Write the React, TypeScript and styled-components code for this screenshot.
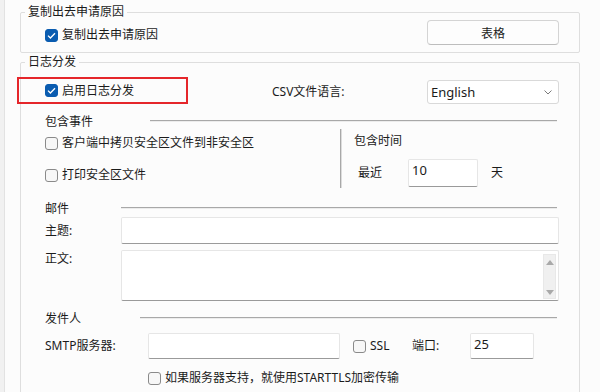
import styled, { createGlobalStyle } from "styled-components";

const GlobalStyle = createGlobalStyle`
    html, body {
        margin: 0;
        padding: 0;
        background: #fcfcfc;
    }
    * {
        box-sizing: border-box;
    }
`

const Page = styled.div`
    display: flex;
    width: 600px;
    height: 392px;
    overflow: hidden;
    background: #fcfcfc;
    font-family: "Noto Sans", "Noto Sans CJK SC", sans-serif;
    font-size: 12px;
    color: #1b1b1b;
`

const Rail = styled.div`
    width: 5px;
    flex-shrink: 0;
    background: #f1f1f1;
    border-right: 1px solid #e2e2e2;
`

const Content = styled.div`
    padding: 3px 0 0 15px;
    display: flex;
    flex-direction: column;
`

const Group = styled.fieldset`
    width: 560px;
    margin: 0;
    padding: 0;
    border: 1px solid #dedede;
    border-radius: 2px;
    min-width: 0;
`

const Legend = styled.legend`
    margin-left: 4px;
    padding: 0 3px;
    line-height: 18px;
    font-size: 12px;
`

const CopyBody = styled.div`
    display: flex;
    align-items: flex-start;
    height: 31px;
    padding: 0 20px 0 24px;
`

const CheckLabel = styled.label<{ $top?: number }>`
    display: flex;
    align-items: center;
    gap: 4px;
    height: 18px;
    line-height: 18px;
    margin-top: ${(p) => p.$top ?? 0}px;
    white-space: nowrap;
`

const Box = styled.span<{ $checked?: boolean }>`
    display: inline-flex;
    align-items: center;
    justify-content: center;
    width: 13px;
    height: 13px;
    border-radius: 3px;
    flex-shrink: 0;
    background: ${(p) => (p.$checked ? "#0a5cb0" : "#f7f7f7")};
    border: 1px solid ${(p) => (p.$checked ? "#0a5cb0" : "#8a8a8a")};
`

const Button = styled.button`
    margin-left: auto;
    margin-top: -1px;
    width: 132px;
    height: 25px;
    background: #fdfdfd;
    border: 1px solid #d4d4d4;
    border-bottom-color: #bdbdbd;
    border-radius: 4px;
    font-family: inherit;
    font-size: 12px;
    color: #1b1b1b;
`

const LogBody = styled.div`
    display: flex;
    flex-direction: column;
    padding: 0 20px 40px 24px;
`

const TopRow = styled.div`
    display: flex;
    align-items: flex-end;
    height: 27px;
    margin-top: 6px;
    margin-left: -28px;
`

const Highlight = styled.div`
    display: flex;
    align-items: center;
    width: 171px;
    height: 27px;
    padding-left: 26px;
    border: 2px solid #e5262b;
`

const FieldText = styled.span<{ $width?: number; $indent?: number }>`
    display: inline-block;
    width: ${(p) => (p.$width ? `${p.$width}px` : "auto")};
    margin-left: ${(p) => p.$indent ?? 0}px;
    line-height: 24px;
    white-space: nowrap;
    flex-shrink: 0;
`

const Select = styled.div`
    display: flex;
    align-items: center;
    justify-content: space-between;
    margin-left: auto;
    width: 132px;
    height: 24px;
    padding: 0 6px 0 3px;
    background: #ffffff;
    border: 1px solid #d9d9d9;
    border-radius: 3px;
    font-size: 13px;
`

const SectionHeader = styled.div<{ $lineStart: number; $top: number }>`
    display: grid;
    grid-template-columns: ${(p) => p.$lineStart}px 1fr;
    align-items: center;
    height: 16px;
    line-height: 16px;
    margin-top: ${(p) => p.$top}px;
    padding-right: 2px;
`

const Rule = styled.div`
    height: 2px;
    border-top: 1px solid #a8a8a8;
    border-bottom: 1px solid #ececec;
    margin-top: -3px;
`

const Events = styled.div`
    display: grid;
    grid-template-columns: 295px 1fr;
    height: 58px;
`

const EventList = styled.div`
    display: flex;
    flex-direction: column;
    gap: 14px;
    padding-top: 4px;
`

const TimeBox = styled.div`
    margin-top: -1px;
    height: 59px;
    padding-left: 13px;
    border-left: 1px solid #a8a8a8;
    box-shadow: inset 1px 0 0 #dcdcdc;
    display: flex;
    flex-direction: column;
`

const TimeTitle = styled.div`
    line-height: 18px;
    padding-top: 3px;
`

const TimeRow = styled.div`
    display: flex;
    align-items: center;
    margin-top: 9px;
    padding-left: 4px;
`

const Input = styled.div<{ $width?: number; $height?: number }>`
    width: ${(p) => (p.$width ? `${p.$width}px` : "auto")};
    flex: ${(p) => (p.$width ? "none" : "1")};
    height: ${(p) => p.$height ?? 27}px;
    padding: 1px 0 0 3px;
    background: #ffffff;
    border: 1px solid #e6e6e6;
    border-bottom-color: #9a9a9a;
    border-radius: 2px;
    line-height: 18px;
    font-size: 13px;
`

const FormRow = styled.div<{ $top?: number; $align?: string }>`
    display: flex;
    align-items: ${(p) => p.$align ?? "center"};
    margin-top: ${(p) => p.$top ?? 0}px;
`

const RowLabel = styled.span<{ $width: number }>`
    width: ${(p) => p.$width}px;
    flex-shrink: 0;
    line-height: 18px;
`

const TextBox = styled.div`
    flex: 1;
    display: flex;
    justify-content: flex-end;
    height: 51px;
    padding: 3px 2px 1px 0;
    background: #ffffff;
    border: 1px solid #e6e6e6;
    border-bottom-color: #9a9a9a;
    border-radius: 2px;
`

const Scrollbar = styled.div`
    width: 13px;
    display: flex;
    flex-direction: column;
    justify-content: space-between;
    align-items: center;
    padding: 5px 0 3px;
    background: #f0f0f0;
    border: 1px solid #e8e8e8;
`

const SslWrap = styled.div`
    display: flex;
    align-items: center;
    width: 59px;
    margin-left: 13px;
`

const Check = ({ checked }: { checked?: boolean }) => (
    <Box $checked={checked}>
        {checked && (
            <svg width="9" height="7" viewBox="0 0 9 7">
                <path d="M1 3.6 L3.4 6 L8 1.2" fill="none" stroke="#fff" strokeWidth="1.3" />
            </svg>
        )}
    </Box>
)

const Arrow = ({ down }: { down?: boolean }) => (
    <svg width="8" height="5" viewBox="0 0 8 5">
        <path d={down ? "M0 0 H8 L4 5 Z" : "M0 5 H8 L4 0 Z"} fill="#a9a9a9" />
    </svg>
)

const App = () => {
    return (
        <>
            <GlobalStyle />
            <Page>
                <Rail />
                <Content>
                    <Group>
                        <Legend>复制出去申请原因</Legend>
                        <CopyBody>
                            <CheckLabel $top={5}>
                                <Check checked />
                                复制出去申请原因
                            </CheckLabel>
                            <Button type="button">表格</Button>
                        </CopyBody>
                    </Group>

                    <Group>
                        <Legend>日志分发</Legend>
                        <LogBody>
                            <TopRow>
                                <Highlight>
                                    <CheckLabel>
                                        <Check checked />
                                        启用日志分发
                                    </CheckLabel>
                                </Highlight>
                                <FieldText $indent={84}>CSV文件语言:</FieldText>
                                <Select>
                                    English
                                    <svg width="8" height="5" viewBox="0 0 8 5">
                                        <path d="M0.5 0.5 L4 4 L7.5 0.5" fill="none" stroke="#7a7a7a" strokeWidth="1" />
                                    </svg>
                                </Select>
                            </TopRow>

                            <SectionHeader $lineStart={105} $top={10}>
                                包含事件
                                <Rule />
                            </SectionHeader>
                            <Events>
                                <EventList>
                                    <CheckLabel>
                                        <Check />
                                        客户端中拷贝安全区文件到非安全区
                                    </CheckLabel>
                                    <CheckLabel>
                                        <Check />
                                        打印安全区文件
                                    </CheckLabel>
                                </EventList>
                                <TimeBox>
                                    <TimeTitle>包含时间</TimeTitle>
                                    <TimeRow>
                                        <RowLabel $width={50}>最近</RowLabel>
                                        <Input $width={70} $height={28}>10</Input>
                                        <FieldText $indent={13}>天</FieldText>
                                    </TimeRow>
                                </TimeBox>
                            </Events>

                            <SectionHeader $lineStart={76} $top={13}>
                                邮件
                                <Rule />
                            </SectionHeader>
                            <FormRow>
                                <RowLabel $width={76}>主题:</RowLabel>
                                <Input />
                            </FormRow>
                            <FormRow $top={6} $align="flex-start">
                                <RowLabel $width={76}>正文:</RowLabel>
                                <TextBox>
                                    <Scrollbar>
                                        <Arrow />
                                        <Arrow down />
                                    </Scrollbar>
                                </TextBox>
                            </FormRow>

                            <SectionHeader $lineStart={95} $top={10}>
                                发件人
                                <Rule />
                            </SectionHeader>
                            <FormRow $top={6}>
                                <RowLabel $width={103}>SMTP服务器:</RowLabel>
                                <Input $width={192} $height={26} />
                                <SslWrap>
                                    <CheckLabel>
                                        <Check />
                                        SSL
                                    </CheckLabel>
                                </SslWrap>
                                <RowLabel $width={58}>端口:</RowLabel>
                                <Input $width={64} $height={26}>25</Input>
                            </FormRow>
                            <FormRow $top={10}>
                                <RowLabel $width={103} />
                                <CheckLabel>
                                    <Check />
                                    如果服务器支持，就使用STARTTLS加密传输
                                </CheckLabel>
                            </FormRow>
                        </LogBody>
                    </Group>
                </Content>
            </Page>
        </>
    )
}

export default App;
